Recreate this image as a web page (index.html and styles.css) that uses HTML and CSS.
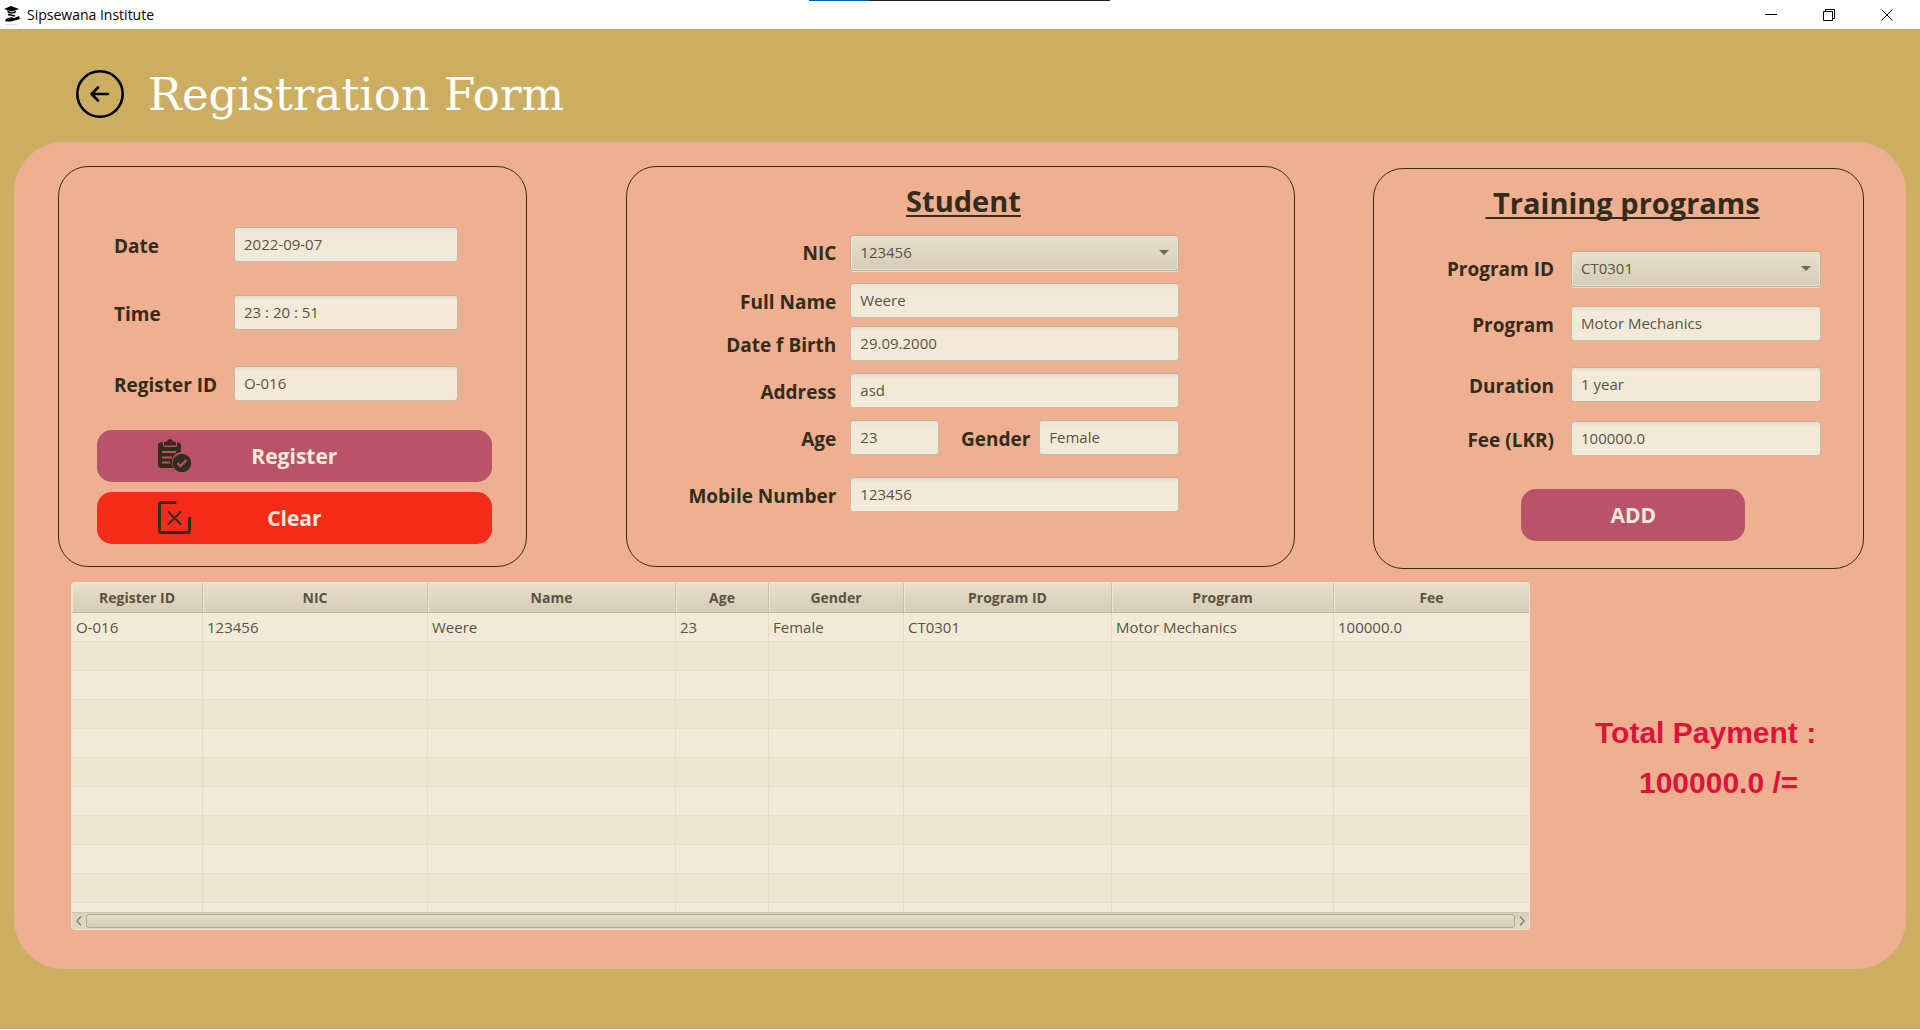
FILE: index.html
```html
<!DOCTYPE html>
<html lang="en">
<head>
<meta charset="utf-8">
<title>Sipsewana Institute</title>
<link rel="stylesheet" href="styles.css">
</head>
<body>
<header class="titlebar">
  <svg class="app-icon" viewBox="0 0 16 20" aria-hidden="true">
    <path d="M0 4 L7 1 L15 4 L8 6.500 Z"/>
    <path d="M3 5 L8 7.500 L12 5.500 L11.500 8 Q8 9.500 4 8 Z"/>
    <path d="M2 14 Q7 11 10 13 L15 11 L16 14 L9 16 Q5 17 1 16 Z"/>
    <path d="M4 9.500 L11 11" stroke="#000" stroke-width="1.500"/>
    <path d="M1 19.500 H13" stroke="#ddd" stroke-width="1"/>
  </svg>
  <span class="titlebar-name">Sipsewana Institute</span>
  <div class="window-buttons">
    <button type="button" aria-label="Minimize"><svg viewBox="0 0 12 12"><path d="M0 5.500 H12"/></svg></button>
    <button type="button" aria-label="Restore"><svg viewBox="0 0 12 12"><path d="M.5 2.500 H9.500 V11.500 H.5 Z M2.500 2.500 V.5 H11.500 V9.500 H9.500"/></svg></button>
    <button type="button" aria-label="Close"><svg viewBox="0 0 12 12"><path d="M.5 .5 L11.500 11.500 M11.500 .5 L.5 11.500"/></svg></button>
  </div>
  <div class="load-strip"></div>
</header>

<main class="app">
  <div class="page-head">
    <button type="button" class="back" aria-label="Back">
      <svg viewBox="0 0 48 48"><circle cx="24" cy="24" r="22.700"/><path d="M32 24 H15.500 M22 17.500 L15.500 24 L22 30.500"/></svg>
    </button>
    <h1>Registration Form</h1>
  </div>

  <section class="panel">
    <div class="cards">
      <form class="card card-register">
        <div class="row"><label for="date">Date</label><input id="date" type="text" value="2022-09-07"></div>
        <div class="row"><label for="time">Time</label><input id="time" type="text" value="23 : 20 : 51"></div>
        <div class="row row-loose"><label for="regid">Register ID</label><input id="regid" type="text" value="O-016"></div>
        <div class="actions">
          <button type="button" class="btn btn-wide">
            <svg viewBox="0 0 33 33" aria-hidden="true">
              <path class="solid" d="M3 3.500 H5 V6 Q5 8 7 8 H17 Q19 8 19 6 V3.500 H20 Q23 3.500 23 6.500 V13 Q15 14 14 22 Q14 26 15.500 29 H3 Q0 29 0 26 V6.500 Q0 3.500 3 3.500 Z"/>
              <path class="solid" d="M6 6.500 V4 Q6 2.500 8 2.500 H9 Q9.500 0 12 0 Q14.500 0 15 2.500 H16 Q18 2.500 18 4 V6.500 Z"/>
              <path class="cut" d="M4 13 H18 M4 18.500 H14 M4 23.500 H12"/>
              <circle class="solid" cx="24" cy="24" r="9.300"/>
              <path class="cut tick" d="M19.500 24 L22.500 27 L28.500 21"/>
            </svg>
            Register
          </button>
          <button type="button" class="btn btn-wide btn-clear">
            <svg viewBox="0 0 33 33" aria-hidden="true">
              <path class="frame" d="M17 1.500 H3.500 Q1.500 1.500 1.500 3.500 V29.500 Q1.500 31.500 3.500 31.500 H29.500 Q31.500 31.500 31.500 29.500 V17"/>
              <path class="cross" d="M10.500 11 L22.500 23 M22.500 11 L10.500 23"/>
            </svg>
            Clear
          </button>
        </div>
      </form>

      <form class="card card-student">
        <h2>Student</h2>
        <div class="row row-select"><label for="nic">NIC</label><span class="select"><select id="nic"><option>123456</option></select></span></div>
        <div class="row"><label for="name">Full Name</label><input id="name" type="text" value="Weere"></div>
        <div class="row row-tight"><label for="dob">Date f Birth</label><input id="dob" type="text" value="29.09.2000"></div>
        <div class="row"><label for="address">Address</label><input id="address" type="text" value="asd"></div>
        <div class="row"><label for="age">Age</label>
          <div class="pair"><input id="age" type="text" value="23"><label for="gender">Gender</label><input id="gender" type="text" value="Female"></div>
        </div>
        <div class="row row-loose"><label for="mobile">Mobile Number</label><input id="mobile" type="text" value="123456"></div>
      </form>

      <form class="card card-programs">
        <h2>&nbsp;Training programs</h2>
        <div class="row row-select"><label for="pid">Program ID</label><span class="select"><select id="pid"><option>CT0301</option></select></span></div>
        <div class="row"><label for="program">Program</label><input id="program" type="text" value="Motor Mechanics"></div>
        <div class="row row-loose"><label for="duration">Duration</label><input id="duration" type="text" value="1 year"></div>
        <div class="row"><label for="fee">Fee (LKR)</label><input id="fee" type="text" value="100000.0"></div>
        <button type="button" class="btn btn-add">ADD</button>
      </form>
    </div>

    <div class="summary">
      <div class="grid-box">
        <div class="grid-view">
          <table>
            <colgroup><col class="c-reg"><col class="c-nic"><col class="c-name"><col class="c-age"><col class="c-gender"><col class="c-pid"><col class="c-program"><col class="c-fee"></colgroup>
            <thead><tr><th>Register ID</th><th>NIC</th><th>Name</th><th>Age</th><th>Gender</th><th>Program ID</th><th>Program</th><th>Fee</th></tr></thead>
            <tbody>
              <tr><td>O-016</td><td>123456</td><td>Weere</td><td>23</td><td>Female</td><td>CT0301</td><td>Motor Mechanics</td><td>100000.0</td></tr>
              <tr><td></td><td></td><td></td><td></td><td></td><td></td><td></td><td></td></tr>
              <tr><td></td><td></td><td></td><td></td><td></td><td></td><td></td><td></td></tr>
              <tr><td></td><td></td><td></td><td></td><td></td><td></td><td></td><td></td></tr>
              <tr><td></td><td></td><td></td><td></td><td></td><td></td><td></td><td></td></tr>
              <tr><td></td><td></td><td></td><td></td><td></td><td></td><td></td><td></td></tr>
              <tr><td></td><td></td><td></td><td></td><td></td><td></td><td></td><td></td></tr>
              <tr><td></td><td></td><td></td><td></td><td></td><td></td><td></td><td></td></tr>
              <tr><td></td><td></td><td></td><td></td><td></td><td></td><td></td><td></td></tr>
              <tr><td></td><td></td><td></td><td></td><td></td><td></td><td></td><td></td></tr>
              <tr><td></td><td></td><td></td><td></td><td></td><td></td><td></td><td></td></tr>
            </tbody>
          </table>
        </div>
        <div class="scrollbar">
          <button type="button" aria-label="Scroll left"><svg viewBox="0 0 6 10"><path d="M5 .5 L1 5 L5 9.500"/></svg></button>
          <div class="thumb"></div>
          <button type="button" aria-label="Scroll right"><svg viewBox="0 0 6 10"><path d="M1 .5 L5 5 L1 9.500"/></svg></button>
        </div>
      </div>
      <div class="total">
        <p>Total Payment :</p>
        <p class="amount">100000.0 /=</p>
      </div>
    </div>
  </section>
</main>
</body>
</html>
```
FILE: styles.css
```css
* { box-sizing: border-box; }

body {
  margin: 0;
  min-height: 100vh;
  display: flex;
  flex-direction: column;
  border-bottom: 1px solid #fff;
  background: #cbae61;
  color: #332c1a;
  font-family: "Open Sans", "Noto Sans", sans-serif;
}

button, input, select { font-family: inherit; }

/* window title bar */
.titlebar {
  position: relative;
  display: flex;
  align-items: center;
  height: 29px;
  padding: 0 4px;
  background: #fff;
  color: #000;
}
.app-icon { width: 16px; height: 20px; }
.titlebar-name { margin-left: 7px; font-size: 14px; line-height: 28px; }
.window-buttons { display: flex; margin-left: auto; }
.window-buttons button {
  display: flex;
  align-items: center;
  justify-content: center;
  width: 58px;
  height: 28px;
  padding: 0;
  border: 0;
  background: none;
}
.window-buttons svg { width: 12px; height: 12px; fill: none; stroke: #000; stroke-width: 1; }
.load-strip {
  position: absolute;
  top: 0;
  left: 42.15%;
  width: 301px;
  height: 1px;
  background: linear-gradient(90deg, #0063b1 60px, #1f1f1f 60px);
}

/* page */
.app { flex: 1; padding: 0 14px; }
.page-head {
  display: flex;
  align-items: center;
  gap: 24px;
  height: 113px;
  padding: 17px 0 0 62px;
}
.back { width: 48px; height: 48px; padding: 0; border: 0; background: none; }
.back svg { display: block; width: 48px; height: 48px; fill: none; stroke: #000; stroke-width: 2.6; stroke-linecap: round; stroke-linejoin: round; }
h1 {
  margin: 0;
  padding-top: 2px;
  color: #fff;
  font-family: "DejaVu Serif", serif;
  font-size: 45px;
  font-weight: 400;
  line-height: 56px;
}

.panel { padding: 24px 42px 39px 44px; border-radius: 50px; background: #efaf91; }
.cards {
  display: grid;
  grid-template-columns: 469fr 99fr 670fr 78fr 491fr;
  align-items: start;
}
.card { border: 1px solid #332c1a; border-radius: 30px; }
.card-register { grid-column: 1; padding: 60px 34px 22px 38px; }
.card-student { grid-column: 3; padding: 12px 115px 54px 40px; }
.card-programs { grid-column: 5; margin-top: 2px; padding: 12px 42px 27px 30px; }

h2 {
  margin: 0;
  font-size: 29px;
  font-weight: 700;
  line-height: 44px;
  text-align: center;
  text-decoration: underline;
  text-decoration-thickness: 2px;
  text-underline-offset: 3px;
  text-decoration-skip-ink: none;
}

/* form rows */
.row { display: grid; align-items: center; margin-top: 12px; }
.row-tight { margin-top: 8px; }
.row-loose { margin-top: 22px; }
label { padding-top: 3px; font-size: 19px; font-weight: 700; line-height: 26px; white-space: nowrap; }
.row-select label { padding-top: 0; }
input, select {
  width: 100%;
  min-width: 0;
  height: 35px;
  margin: 0;
  padding: 0 9px 2px;
  border: 1px solid #c6bfa8;
  border-top-color: #bdb59c;
  border-radius: 3px;
  background: linear-gradient(#e6dfcb, #f2ead9 5px);
  color: #5b523f;
  font-size: 15px;
}
select {
  display: block;
  height: 36px;
  appearance: none;
  background: linear-gradient(#e6dfcb, #d5cdb8);
  border-color: #bbb298;
  box-shadow: inset 0 0 0 1px #ece4d0, 0 1px 0 #f3dcc4;
}
.select { position: relative; display: block; }
.select::after {
  content: "";
  position: absolute;
  right: 10px;
  top: 15px;
  border: 5px solid transparent;
  border-top-color: #706854;
  border-bottom: 0;
  pointer-events: none;
}

.card-register .row { grid-template-columns: 120px 224px; margin: 0 0 33px 17px; }
.card-register .row-loose { margin-top: 36px; margin-bottom: 29px; }
.actions { display: grid; gap: 10px; }

.card-student .row { grid-template-columns: 1fr 329px; column-gap: 14px; }
.card-student .row label, .card-programs .row label { text-align: right; }
.card-student h2 { margin: 0 -71px 0 10px; }
.pair { display: grid; grid-template-columns: 89px 1fr 140px; align-items: center; column-gap: 9px; }

.card-programs h2 { margin: 0 -42px 0 -22px; }
.card-programs .row { grid-template-columns: 1fr 250px; column-gap: 17px; margin-top: 19px; }
.card-programs .row-select, .card-programs .row-loose { margin-top: 26px; }

/* buttons */
.btn {
  position: relative;
  height: 52px;
  padding: 0;
  border: 0;
  border-radius: 15px;
  background: #b85369;
  color: #f4ead7;
  font-size: 21px;
  font-weight: 700;
}
.btn-wide svg { position: absolute; left: 61px; top: 9px; width: 33px; height: 33px; fill: none; }
.btn-clear { background: #f52b19; }
.btn-add { display: block; width: 224px; margin: 33px auto 0 117px; }
.solid { fill: #332c1a; }
.cut { stroke: #b85369; stroke-width: 2; }
.tick { stroke-width: 2.4; }
.frame { stroke: #332c1a; stroke-width: 3; stroke-linecap: round; }
.cross { stroke: #332c1a; stroke-width: 2; stroke-linecap: round; }

/* table and total */
.summary { display: flex; margin: 13px 0 0 13px; }
.grid-box { flex: 0 1 1459px; overflow: hidden; border: 1px solid #efe3cc; border-radius: 4px; background: #f2ead9; }
.grid-view { height: 329px; overflow: hidden; }
table { width: 100%; border-collapse: separate; border-spacing: 0; table-layout: fixed; color: #5b523f; font-size: 15px; }
.c-reg { width: 131px; }
.c-nic { width: 225px; }
.c-name { width: 248px; }
.c-age { width: 93px; }
.c-gender { width: 135px; }
.c-pid { width: 208px; }
.c-program { width: 222px; }
.c-fee { width: 195px; }
th {
  height: 30px;
  padding: 1px 0 0;
  border-right: 1px solid #c6bea8;
  border-bottom: 1px solid #bfb79f;
  background: linear-gradient(#e6dfcb, #d5cdb8);
  box-shadow: inset 1px 1px 0 #ebe4d1;
  font-size: 14px;
  line-height: 20px;
}
td { height: 29px; padding: 0 4px; border-right: 1px solid #e4dcc8; border-bottom: 1px solid #e4dcc8; line-height: 20px; }
th:last-child, td:last-child { border-right: 0; }
tbody tr:nth-child(even) { background: #ede5d2; }
.scrollbar { display: flex; align-items: center; height: 17px; border-top: 1px solid #cdc5b0; background: linear-gradient(#d9d1bd, #e2dac6); }
.scrollbar button { display: flex; align-items: center; justify-content: center; width: 14px; height: 16px; padding: 0; border: 0; background: none; }
.scrollbar svg { width: 6px; height: 10px; fill: none; stroke: #857d69; stroke-width: 1.4; }
.thumb { flex: 1; height: 14px; border: 1px solid #b1a992; border-radius: 3px; background: linear-gradient(#e6dfcb, #d5cdb8); }

.total { flex: 1; padding: 126px 0 0 65px; color: #dc143c; font-family: "Liberation Sans", Arial, sans-serif; font-size: 30px; font-weight: 700; line-height: 50px; white-space: nowrap; }
.total p { margin: 0; }
.total .amount { padding-left: 44px; }
```
